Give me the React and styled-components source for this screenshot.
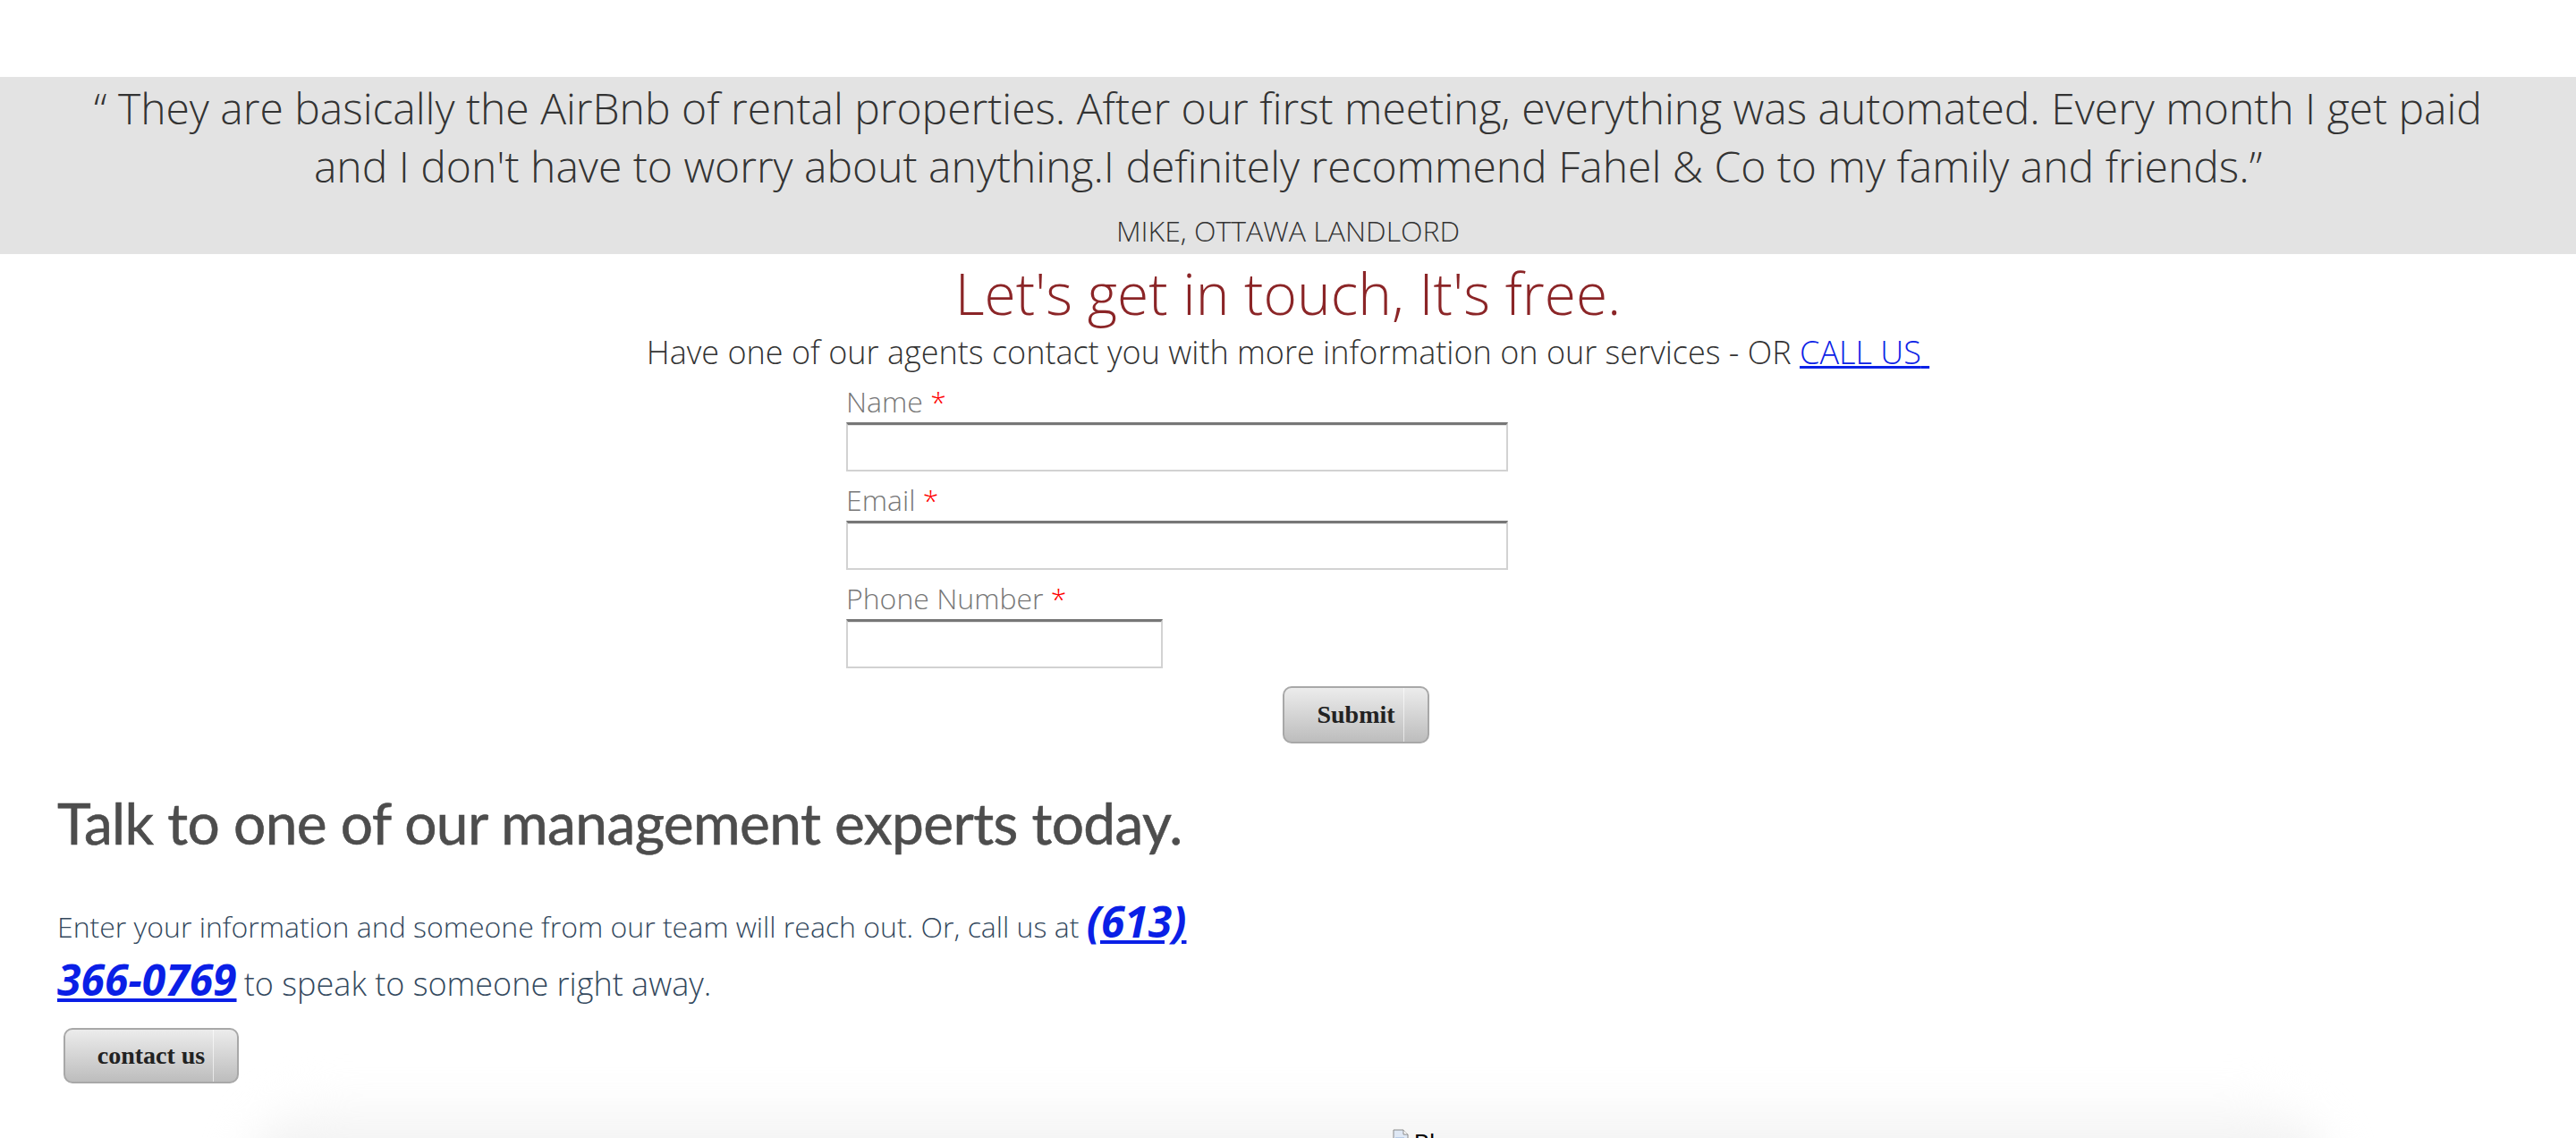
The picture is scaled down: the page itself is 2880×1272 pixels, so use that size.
import styled, { createGlobalStyle } from "styled-components";

const GlobalStyle = createGlobalStyle`
  html, body {
    margin: 0;
    padding: 0;
    background: #fff;
  }
  body {
    font-family: "Open Sans", "Liberation Sans", sans-serif;
    overflow: hidden;
  }
`;

const App = () => {
  return (
    <Page>
      <GlobalStyle />
      <Testimonial>
        <Quote>
          “ They are basically the AirBnb of rental properties. After our first meeting, everything
          was automated. Every month I get paid and I don't have to worry about anything.I definitely
          recommend Fahel &amp; Co to my family and friends.”
        </Quote>
        <Author>MIKE, OTTAWA LANDLORD</Author>
      </Testimonial>

      <Intro>
        <Title>Let's get in touch, It's free.</Title>
        <Lead>
          Have one of our agents contact you with more information on our services - OR{" "}
          <a href="#call">CALL US{"\u00a0"}</a>
        </Lead>
      </Intro>

      <Form onSubmit={(e) => e.preventDefault()}>
        <Field>
          <Label>
            Name <Req>*</Req>
          </Label>
          <Input type="text" $w={740} />
        </Field>
        <Field>
          <Label>
            Email <Req>*</Req>
          </Label>
          <Input type="email" $w={740} />
        </Field>
        <Field>
          <Label>
            Phone Number <Req>*</Req>
          </Label>
          <Input type="tel" $w={354} />
        </Field>
        <Button type="submit" $w={164} $h={64} $shift={488} $top={9}>
          Submit
        </Button>
      </Form>

      <Experts>
        <ExpertsTitle>Talk to one of our management experts today.</ExpertsTitle>
        <ExpertsText>
          Enter your information and someone from our team will reach out. Or, call us at{" "}
          <Phone href="tel:6133660769">(613) 366-0769</Phone>{" "}
          <Tail>to speak to someone right away.</Tail>
        </ExpertsText>
        <Button type="button" $w={196} $h={62} $shift={7} $top={22}>
          contact us
        </Button>
      </Experts>

      <Card>
        <Broken>
          <svg width="18" height="20" viewBox="0 0 18 20">
            <path d="M1 1h11l5 5v13H1z" fill="#dfe8f5" stroke="#8a8a8a" />
            <path d="M12 1v5h5" fill="#fff" stroke="#8a8a8a" />
            <rect x="3" y="9" width="10" height="7" fill="#b9cde8" />
            <path d="M3 16l3-4 3 3 2-2 2 3z" fill="#7fae5a" />
          </svg>
          <span>Blog</span>
        </Broken>
      </Card>
    </Page>
  );
};

export default App;

const Page = styled.div`
  padding-top: 86px;
  min-height: 1272px;
  box-sizing: border-box;
`;

const Testimonial = styled.section`
  background: #e3e3e3;
  text-align: center;
  padding: 2px 0 5px;
  color: #333;
`;

const Quote = styled.p`
  margin: 0 auto;
  max-width: 2720px;
  font-size: 48px;
  font-weight: 300;
  line-height: 65px;
`;

const Author = styled.p`
  margin: 19px 0 0;
  font-size: 32px;
  font-weight: 300;
  line-height: 42px;
`;

const Intro = styled.div`
  text-align: center;
`;

const Title = styled.h2`
  margin: 8px 0 0;
  font-size: 64px;
  font-weight: 300;
  line-height: 72px;
  color: #8b2527;
`;

const Lead = styled.p`
  margin: 5px 0 0;
  font-size: 36px;
  font-weight: 300;
  color: #333;

  a {
    color: #0b22e6;
    text-decoration: underline;
  }
`;

const Form = styled.form`
  width: 988px;
  margin: 10px auto 0;
  display: flex;
  flex-direction: column;
  gap: 11px;
`;

const Field = styled.div`
  display: flex;
  flex-direction: column;
`;

const Label = styled.label`
  font-size: 32px;
  font-weight: 300;
  line-height: 42px;
  color: #777;
  margin-bottom: 2px;
`;

const Req = styled.span`
  color: #f00;
`;

const Input = styled.input`
  width: ${(p) => p.$w}px;
  height: 55px;
  box-sizing: border-box;
  background: #fff;
  border: 2px solid #d2d2d2;
  border-top: 3px solid #777;
  box-shadow: inset 0 1px 0 #e6e6e6;
  outline: none;
  padding: 0 10px;
  font-size: 28px;
`;

const Button = styled.button`
  position: relative;
  width: ${(p) => p.$w}px;
  height: ${(p) => p.$h}px;
  margin: ${(p) => p.$top}px 0 0 ${(p) => p.$shift}px;
  box-sizing: border-box;
  border: 2px solid #a8a8a8;
  border-radius: 10px;
  background: linear-gradient(#ececec, #bdbdbd);
  font-family: "Liberation Serif", "Times New Roman", serif;
  font-size: 28px;
  font-weight: 700;
  color: #222;
  cursor: pointer;
  padding: 0;

  &::after {
    content: "";
    position: absolute;
    top: 0;
    bottom: 0;
    right: 26px;
    width: 1px;
    background: rgba(255, 255, 255, 0.6);
  }
`;

const Experts = styled.section`
  width: 1280px;
  padding-left: 64px;
  margin-top: 50px;
`;

const ExpertsTitle = styled.h2`
  margin: 0;
  font-family: Lato, "Open Sans", sans-serif;
  font-size: 64px;
  font-weight: 400;
  letter-spacing: -0.6px;
  white-space: nowrap;
  color: #4d4d4d;
  -webkit-text-stroke: 0.6px #4d4d4d;
`;

const ExpertsText = styled.p`
  margin: 39px 0 0;
  font-size: 32px;
  font-weight: 300;
  color: #34495e;
`;

const Tail = styled.span`
  font-size: 36px;
`;

const Phone = styled.a`
  font-size: 48px;
  font-weight: 700;
  font-style: italic;
  color: #0a1fe6;
  text-decoration: underline;
`;

const Card = styled.section`
  position: relative;
  isolation: isolate;
  width: 2330px;
  height: 240px;
  margin: 0 auto;
  display: flex;
  justify-content: center;
  padding: 51px 0 0 310px;
  box-sizing: border-box;

  &::before {
    content: "";
    position: absolute;
    inset: 20px 0 -40px;
    z-index: -1;
    border-radius: 90px;
    background: linear-gradient(#fbfbfb, #f1f1f1 60px);
    filter: blur(24px);
  }
`;

const Broken = styled.div`
  display: flex;
  align-items: flex-start;
  gap: 6px;
  font-family: "Liberation Sans", sans-serif;
  font-size: 26px;
  color: #000;
  height: 30px;
`;
